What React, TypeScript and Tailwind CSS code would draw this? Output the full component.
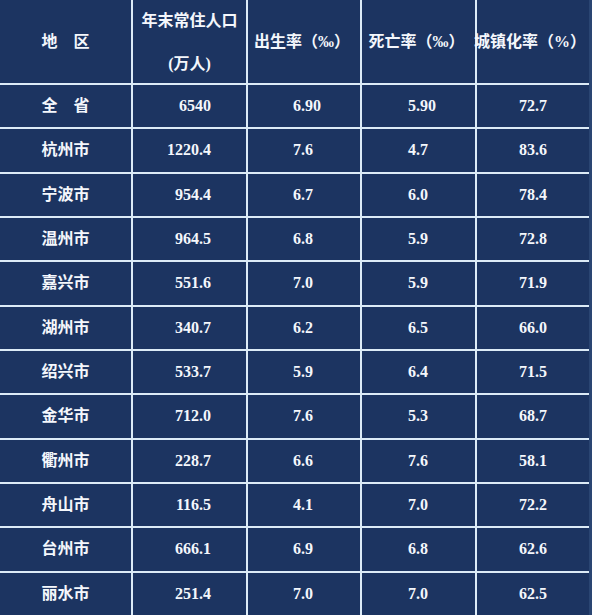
import React from "react";

const rows: [string, string, string, string, string][] = [
  ["全　省", "6540", "6.90", "5.90", "72.7"],
  ["杭州市", "1220.4", "7.6", "4.7", "83.6"],
  ["宁波市", "954.4", "6.7", "6.0", "78.4"],
  ["温州市", "964.5", "6.8", "5.9", "72.8"],
  ["嘉兴市", "551.6", "7.0", "5.9", "71.9"],
  ["湖州市", "340.7", "6.2", "6.5", "66.0"],
  ["绍兴市", "533.7", "5.9", "6.4", "71.5"],
  ["金华市", "712.0", "7.6", "5.3", "68.7"],
  ["衢州市", "228.7", "6.6", "7.6", "58.1"],
  ["舟山市", "116.5", "4.1", "7.0", "72.2"],
  ["台州市", "666.1", "6.9", "6.8", "62.6"],
  ["丽水市", "251.4", "7.0", "7.0", "62.5"],
];

const cell = "bg-[#1c3461] flex items-center";

export default function App() {
  return (
    <div
      className="w-[592px] h-[615px] bg-[#1c3461] flex overflow-hidden text-[#f4f7fc] font-bold text-[16px]"
      style={{ fontFamily: '"Liberation Serif", "Noto Sans CJK SC", serif' }}
    >
      <div className="w-[589px] h-[615px] grid grid-cols-[131px_113px_112px_113px_112px] grid-rows-[83px_repeat(12,1fr)] gap-[2px] bg-[#dcebf7]">
        <div className={`${cell} justify-center`}>地　区</div>
        <div className={`${cell} flex-col justify-center leading-[43px]`}>
          <div>年末常住人口</div>
          <div>(万人)</div>
        </div>
        <div className={`${cell} justify-center pr-[4px]`}>出生率（‰）</div>
        <div className={`${cell} justify-center pr-[4px]`}>死亡率（‰）</div>
        <div className={`${cell} justify-center pr-[6px] whitespace-nowrap`}>城镇化率（%）</div>
        {rows.map((r, i) => (
          <React.Fragment key={i}>
            <div className={`${cell} justify-center`}>{r[0]}</div>
            <div className={`${cell} justify-end pr-[35px]`}>{r[1]}</div>
            <div className={`${cell} justify-start pl-[45px]`}>{r[2]}</div>
            <div className={`${cell} justify-start pl-[46px]`}>{r[3]}</div>
            <div className={`${cell} justify-start pl-[42px]`}>{r[4]}</div>
          </React.Fragment>
        ))}
      </div>
      <div className="w-[3px] h-full bg-[#2a4572]" />
    </div>
  );
}
